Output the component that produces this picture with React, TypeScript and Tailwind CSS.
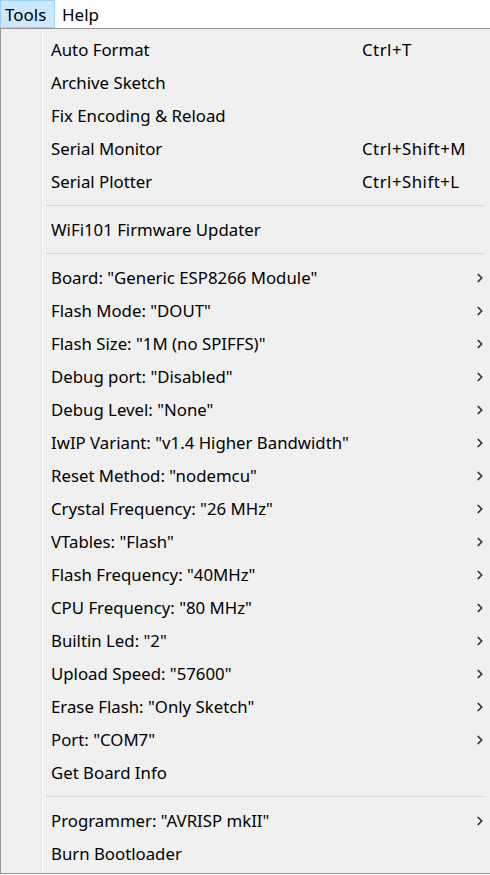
import { ChevronRight } from 'lucide-react'

type Entry =
  | { kind: 'item'; label: string; shortcut?: string; sub?: boolean }
  | { kind: 'sep' }

const ENTRIES: Entry[] = [
  { kind: 'item', label: 'Auto Format', shortcut: 'Ctrl+T' },
  { kind: 'item', label: 'Archive Sketch' },
  { kind: 'item', label: 'Fix Encoding & Reload' },
  { kind: 'item', label: 'Serial Monitor', shortcut: 'Ctrl+Shift+M' },
  { kind: 'item', label: 'Serial Plotter', shortcut: 'Ctrl+Shift+L' },
  { kind: 'sep' },
  { kind: 'item', label: 'WiFi101 Firmware Updater' },
  { kind: 'sep' },
  { kind: 'item', label: 'Board: "Generic ESP8266 Module"', sub: true },
  { kind: 'item', label: 'Flash Mode: "DOUT"', sub: true },
  { kind: 'item', label: 'Flash Size: "1M (no SPIFFS)"', sub: true },
  { kind: 'item', label: 'Debug port: "Disabled"', sub: true },
  { kind: 'item', label: 'Debug Level: "None"', sub: true },
  { kind: 'item', label: 'IwIP Variant: "v1.4 Higher Bandwidth"', sub: true },
  { kind: 'item', label: 'Reset Method: "nodemcu"', sub: true },
  { kind: 'item', label: 'Crystal Frequency: "26 MHz"', sub: true },
  { kind: 'item', label: 'VTables: "Flash"', sub: true },
  { kind: 'item', label: 'Flash Frequency: "40MHz"', sub: true },
  { kind: 'item', label: 'CPU Frequency: "80 MHz"', sub: true },
  { kind: 'item', label: 'Builtin Led: "2"', sub: true },
  { kind: 'item', label: 'Upload Speed: "57600"', sub: true },
  { kind: 'item', label: 'Erase Flash: "Only Sketch"', sub: true },
  { kind: 'item', label: 'Port: "COM7"', sub: true },
  { kind: 'item', label: 'Get Board Info' },
  { kind: 'sep' },
  { kind: 'item', label: 'Programmer: "AVRISP mkII"', sub: true },
  { kind: 'item', label: 'Burn Bootloader' },
]

export default function App() {
  return (
    <div
      className="w-[490px] h-[875px] overflow-hidden bg-white text-black"
      style={{ fontFamily: '"Noto Sans", "Open Sans", sans-serif' }}
    >
      {/* menu bar */}
      <div className="flex h-[28px] text-[17px] leading-none">
        <div className="w-[55px] flex items-center pl-[4px] bg-[#cce8ff] border border-[#99d1ff]">Tools</div>
        <div className="flex items-center pl-[7px]">Help</div>
      </div>

      {/* dropdown */}
      <div className="relative h-[846px] overflow-hidden bg-[#f0f0f0] border-l border-t border-b border-[#979797] pt-[4px] text-[16.8px]">
        <div className="absolute left-[40px] top-0 bottom-0 w-px bg-[#e3e3e3]" />
        <div className="absolute left-[41px] top-0 bottom-0 w-px bg-[#fbfbfb]" />
        {ENTRIES.map((e, i) =>
          e.kind === 'sep' ? (
            <div key={i} className="h-[15px] flex items-center pl-[45px] pr-[5px]">
              <div className="h-px w-full bg-[#d7d7d7]" />
            </div>
          ) : (
            <div key={i} className="relative h-[33px] flex items-center pl-[50px] whitespace-nowrap">
              <span className="w-[311px]">{e.label}</span>
              {e.shortcut && <span className="tracking-[0.5px]">{e.shortcut}</span>}
              {e.sub && (
                <ChevronRight
                  size={14}
                  strokeWidth={3}
                  className="absolute left-[472px] text-[#333]"
                />
              )}
            </div>
          ),
        )}
      </div>
    </div>
  )
}
